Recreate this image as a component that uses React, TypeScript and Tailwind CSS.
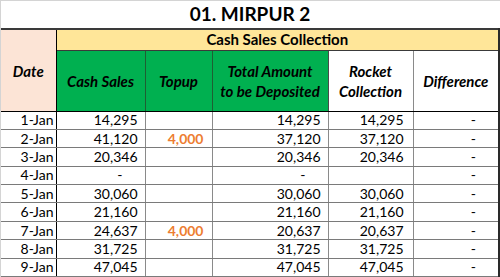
import React from "react";

const rows = [
  { date: "1-Jan", cash: "14,295", topup: "", total: "14,295", rocket: "14,295" },
  { date: "2-Jan", cash: "41,120", topup: "4,000", total: "37,120", rocket: "37,120" },
  { date: "3-Jan", cash: "20,346", topup: "", total: "20,346", rocket: "20,346" },
  { date: "4-Jan", cash: "-", topup: "", total: "-", rocket: "" },
  { date: "5-Jan", cash: "30,060", topup: "", total: "30,060", rocket: "30,060" },
  { date: "6-Jan", cash: "21,160", topup: "", total: "21,160", rocket: "21,160" },
  { date: "7-Jan", cash: "24,637", topup: "4,000", total: "20,637", rocket: "20,637" },
  { date: "8-Jan", cash: "31,725", topup: "", total: "31,725", rocket: "31,725" },
  { date: "9-Jan", cash: "47,045", topup: "", total: "47,045", rocket: "47,045" },
];

const Num = ({ value }: { value: string }) => {
  if (value === "-") return <span className="pr-[22px]">-</span>;
  return <span className="pr-[7px]">{value}</span>;
};

const App = () => {
  return (
    <div className="w-[500px] h-[277px] overflow-hidden bg-white border-t border-l border-[#d4d4d4] font-['Lato',sans-serif] text-black">
      <div className="h-[27px] w-[498px] flex items-center justify-center text-[19px] font-bold">
        01. MIRPUR 2
      </div>
      <table className="w-[498px] table-fixed border-collapse text-[14px]">
        <colgroup>
          <col className="w-[55px]" />
          <col className="w-[89px]" />
          <col className="w-[67px]" />
          <col className="w-[116px]" />
          <col className="w-[85px]" />
          <col className="w-[86px]" />
        </colgroup>
        <thead>
          <tr className="h-[21px]">
            <th
              rowSpan={2}
              className="bg-[#fce4d6] border-t-2 border-t-[#3a3a3a] border-r border-r-black border-b border-b-black italic font-bold text-[15px] align-middle pt-[2px]"
            >
              Date
            </th>
            <th
              colSpan={5}
              className="bg-[#ffe699] border-t-2 border-t-[#3a3a3a] border-b border-b-[#3a3a3a] border-r-2 border-r-[#2a2a2a] font-bold text-[15px] leading-none"
            >
              Cash Sales Collection
            </th>
          </tr>
          <tr className="h-[61px] font-bold italic text-[15px] leading-[20px]">
            <th className="bg-[#00b050] border-r border-r-[#1f5f33] border-b border-b-black">Cash Sales</th>
            <th className="bg-[#00b050] border-r border-r-[#1f5f33] border-b border-b-black">Topup</th>
            <th className="bg-[#00b050] border-r border-r-[#4a4a4a] border-b border-b-black">
              Total Amount
              <br />
              to be Deposited
            </th>
            <th className="bg-white border-r border-r-[#8a8a8a] border-b border-b-black">
              Rocket
              <br />
              Collection
            </th>
            <th className="bg-white border-r-2 border-r-[#2a2a2a] border-b border-b-black">Difference</th>
          </tr>
        </thead>
        <tbody>
          {rows.map((r) => (
            <tr key={r.date} className="h-[18.4px] leading-none">
              <td className="text-right pr-[2px] border-r border-r-black border-b border-b-[#7a7a7a]">{r.date}</td>
              <td className="text-right border-r border-r-[#8a8a8a] border-b border-b-[#7a7a7a]">
                <Num value={r.cash} />
              </td>
              <td className="text-right border-r border-r-[#8a8a8a] border-b border-b-[#7a7a7a] text-[#ed7d31] font-bold">
                {r.topup && <span className="pr-[8px]">{r.topup}</span>}
              </td>
              <td className="text-right border-r border-r-[#8a8a8a] border-b border-b-[#7a7a7a]">
                <Num value={r.total} />
              </td>
              <td className="text-right border-r border-r-[#8a8a8a] border-b border-b-[#7a7a7a]">
                {r.rocket && <span className="pr-[9px]">{r.rocket}</span>}
              </td>
              <td className="text-right border-r-2 border-r-[#2a2a2a] border-b border-b-[#7a7a7a]">
                <span className="pr-[22px]">-</span>
              </td>
            </tr>
          ))}
        </tbody>
      </table>
    </div>
  );
};

export default App;
